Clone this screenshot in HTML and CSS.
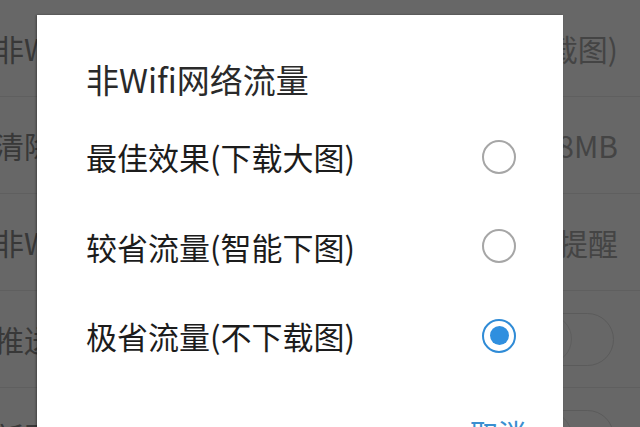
FILE: index.html
```html
<!DOCTYPE html>
<html lang="zh-CN">
<head>
<meta charset="utf-8">
<title>非Wifi网络流量</title>
<link rel="stylesheet" href="styles.css">
</head>
<body>
<div class="settings">
  <div class="row"><span class="label">非Wifi网络图片</span><span class="value">极省流量(不下载图)</span></div>
  <div class="row"><span class="label">清除缓存</span><span class="value">12.8MB</span></div>
  <div class="row"><span class="label">非Wifi播放视频</span><span class="value">每次提醒</span></div>
  <div class="row"><span class="label">推送通知</span><span class="toggle"><span class="knob"></span></span></div>
  <div class="row"><span class="label">新回复提醒</span><span class="toggle"><span class="knob"></span></span></div>
</div>

<div class="dialog">
  <div class="title">非Wifi网络流量</div>
  <div class="options">
    <div class="option"><span class="opt-text">最佳效果(下载大图)</span><span class="radio"></span></div>
    <div class="option"><span class="opt-text">较省流量(智能下图)</span><span class="radio"></span></div>
    <div class="option"><span class="opt-text">极省流量(不下载图)</span><span class="radio checked"></span></div>
  </div>
  <div class="footer"><span class="cancel">取消</span></div>
</div>
</body>
</html>
```

FILE: styles.css
```css
html, body {
  margin: 0;
  padding: 0;
  width: 640px;
  height: 427px;
  overflow: hidden;
  background: #676767;
  font-family: "Noto Sans CJK SC", "Noto Sans", sans-serif;
}

.settings {
  margin-left: -6px;
  height: 427px;
  overflow: hidden;
}

.row {
  height: 96px;
  border-bottom: 1px solid #5f5f5f;
  display: flex;
  align-items: center;
  justify-content: space-between;
  padding-right: 22px;
}

.label {
  font-size: 30px;
  color: #383838;
}

.value {
  font-size: 30px;
  color: #444444;
}

.toggle {
  width: 98px;
  height: 53px;
  border: 1.5px solid #5b5b5b;
  border-radius: 28px;
  display: flex;
  align-items: center;
  margin-right: 4px;
  box-sizing: border-box;
  padding-left: 5px;
}

.knob {
  width: 50px;
  height: 50px;
  border-radius: 50%;
  border: 1.5px solid #5e5e5e;
  box-sizing: border-box;
}

.dialog {
  position: absolute;
  left: 37px;
  top: 15px;
  width: 526px;
  height: 412px;
  overflow: hidden;
  background: #ffffff;
  box-shadow: -1px 0 2px rgba(0, 0, 0, 0.35);
  box-sizing: border-box;
  padding: 44px 47px 0 49px;
}

.title {
  font-size: 33px;
  line-height: 40px;
  color: #2a2a2a;
}

.options {
  margin-top: 13px;
}

.option {
  height: 89.5px;
  display: flex;
  align-items: center;
  justify-content: space-between;
}

.opt-text {
  font-size: 31px;
  color: #1c1c1c;
}

.radio {
  width: 34px;
  height: 34px;
  border-radius: 50%;
  border: 2px solid #a6a6a6;
  box-sizing: border-box;
  display: flex;
  align-items: center;
  justify-content: center;
}

.radio.checked {
  border: 2.5px solid #2f8bd6;
}

.radio.checked::after {
  content: "";
  width: 19px;
  height: 19px;
  border-radius: 50%;
  background: #2f8fdf;
}

.footer {
  margin-top: 32px;
  margin-right: -10px;
  text-align: right;
}

.cancel {
  font-size: 28px;
  line-height: 40px;
  color: #3a8fd0;
}
```
